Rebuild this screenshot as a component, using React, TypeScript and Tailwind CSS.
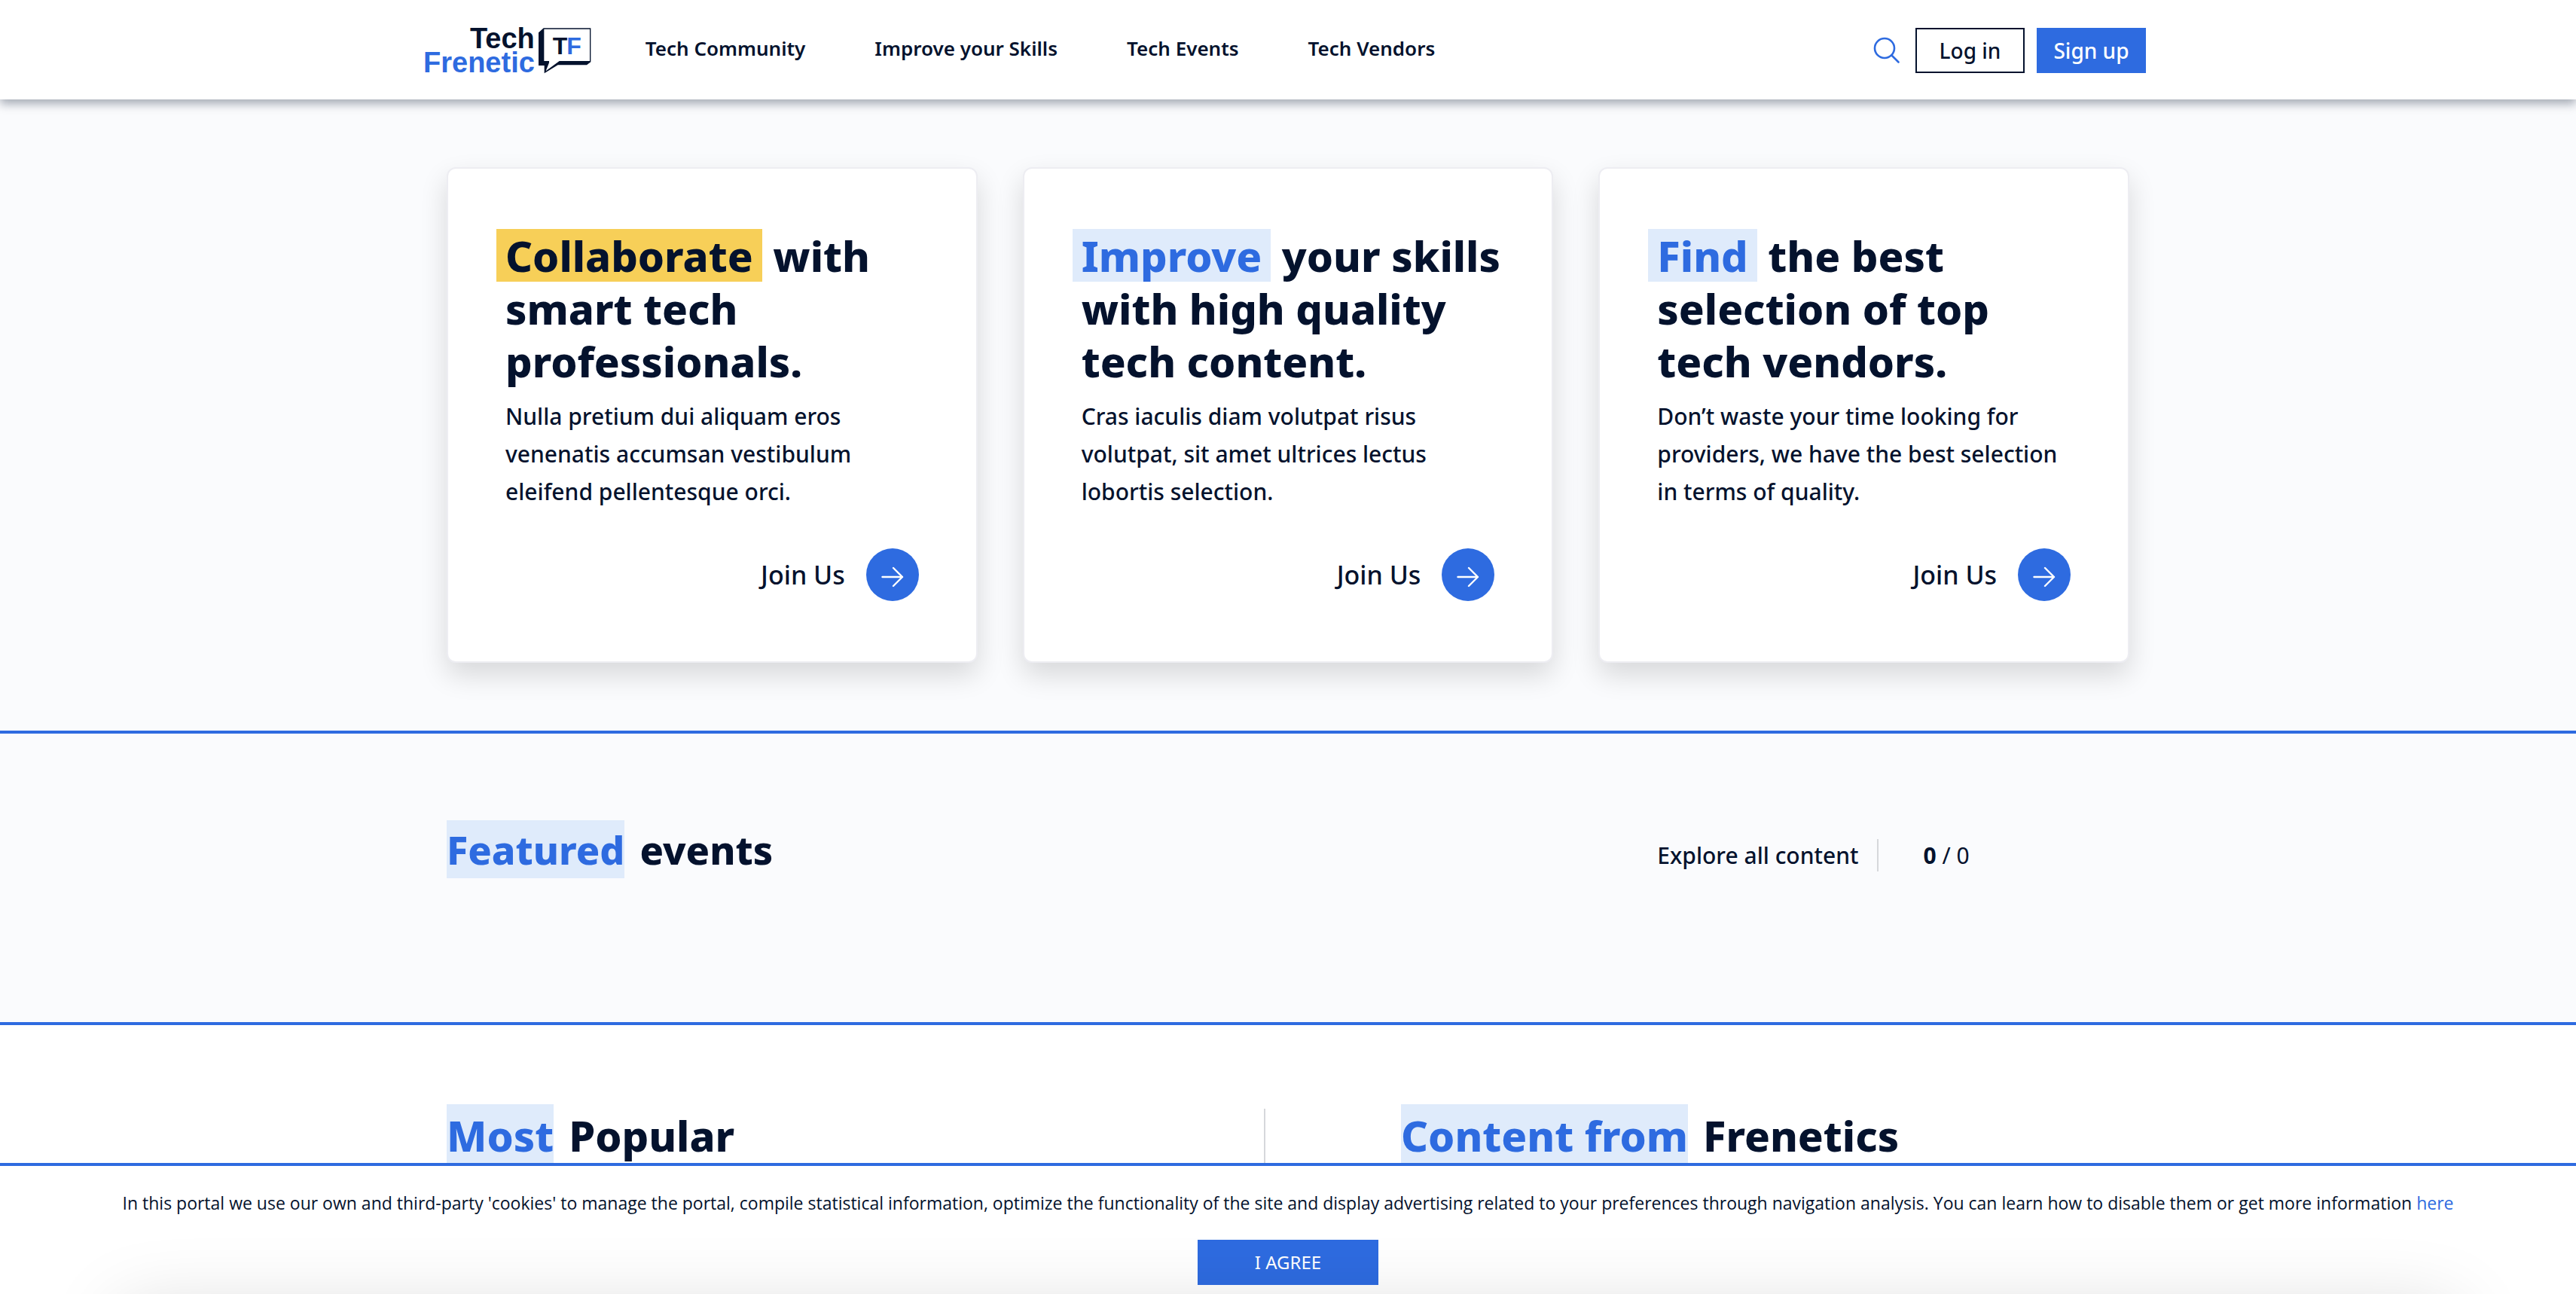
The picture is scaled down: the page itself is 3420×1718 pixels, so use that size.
import React from "react";

const navItems = ["Tech Community", "Improve your Skills", "Tech Events", "Tech Vendors"];

const cards = [
  {
    highlight: "Collaborate",
    rest: "with smart tech professionals.",
    body: "Nulla pretium dui aliquam eros venenatis accumsan vestibulum eleifend pellentesque orci.",
    tone: "bg-[#f7cf58] text-[#04122d]",
  },
  {
    highlight: "Improve",
    rest: "your skills with high quality tech content.",
    body: "Cras iaculis diam volutpat risus volutpat, sit amet ultrices lectus lobortis selection.",
    tone: "bg-[#dfebfb] text-[#2e6be0]",
  },
  {
    highlight: "Find",
    rest: "the best selection of top tech vendors.",
    body: "Don’t waste your time looking for providers, we have the best selection in terms of quality.",
    tone: "bg-[#dfebfb] text-[#2e6be0]",
  },
];

function Logo() {
  return (
    <a href="#" aria-label="Tech Frenetic" className="flex shrink-0 items-center gap-1 font-['Liberation_Sans',sans-serif]">
      <span className="flex flex-col text-right text-[38px] leading-8 font-bold">
        <span>Tech</span>
        <span className="text-[#2e6be0]">Frenetic</span>
      </span>
      <svg viewBox="491 44 213 186" className="h-[62px] w-[71px]" aria-hidden="true">
        <path d="M494 66 L514 48 H702 V183 L686 195 H571 L517 228 V197 H494 Z" fill="#04122d" />
        <path d="M516 52 H698 V179 H577 L523 219 L536 186 V179 H516 Z" fill="#fff" />
        <text x="550" y="152" fontSize="96" fontWeight="700" fill="#04122d">T</text>
        <text x="606" y="152" fontSize="96" fontWeight="700" fill="#2e6be0">F</text>
      </svg>
    </a>
  );
}

function Header() {
  return (
    <header className="relative z-10 bg-white px-8 pt-[35px] pb-[33px] shadow-[0_6px_12px_rgba(4,18,45,0.34)]">
      <div className="mx-auto flex max-w-[2296px] items-center pr-[9px]">
        <Logo />
        <nav className="ml-[72px] flex gap-[92px] pb-1.5 text-[26px] leading-9 font-semibold">
          {navItems.map((item) => (
            <a key={item} href="#" className="whitespace-nowrap">{item}</a>
          ))}
        </nav>
        <div className="ml-auto flex items-center gap-4 text-[28px] font-medium">
          <button type="button" aria-label="Search" className="mr-1">
            <svg viewBox="0 0 36 36" className="size-9" fill="none" stroke="#2e6be0" strokeWidth="2.6" strokeLinecap="round">
              <circle cx="15" cy="15" r="13" />
              <path d="M24.5 24.5 L33.5 33.5" />
            </svg>
          </button>
          <button type="button" className="h-[60px] w-[145px] border-2 border-[#04122d] leading-10">Log in</button>
          <button type="button" className="h-[60px] w-[145px] bg-[#2e6be0] leading-10 text-white">Sign up</button>
        </div>
      </div>
    </header>
  );
}

function Card({ highlight, rest, body, tone }: (typeof cards)[number]) {
  return (
    <article className="flex flex-col rounded-xl border-2 border-[#ededf2] bg-white px-[76px] py-20 shadow-[0_16px_36px_rgba(0,0,0,0.14)]">
      <h2 className="-mr-4 text-[56px] leading-[70px] font-extrabold">
        <span className={`-ml-3 inline-block px-3 ${tone}`}>{highlight}</span> {rest}
      </h2>
      <p className="mt-3.5 text-[30px] leading-[50px] font-medium">{body}</p>
      <a href="#" className="mt-[50px] flex items-center gap-7 self-end text-[34px] font-medium">
        Join Us
        <span className="flex size-[70px] items-center justify-center rounded-full bg-[#2e6be0]">
          <svg viewBox="0 0 30 28" className="mt-1.5 h-7 w-[30px]" fill="none" stroke="#fff" strokeWidth="2.4" strokeLinecap="round" strokeLinejoin="round">
            <path d="M1.5 14 H28 M16 2 L28 14 L16 26" />
          </svg>
        </span>
      </a>
    </article>
  );
}

function Mark({ children }: { children: React.ReactNode }) {
  return <span className="bg-[#dfebfb] text-[#2e6be0]">{children}</span>;
}

function CookieBar() {
  return (
    <aside aria-label="Cookies" className="fixed inset-x-0 bottom-0 z-20 flex flex-col items-center gap-8 overflow-hidden border-t-4 border-[#2e6be0] bg-white px-8 pt-8 pb-3">
      <p className="font-['Open_Sans',sans-serif] text-[23px] leading-[34px] font-medium">
        In this portal we use our own and third-party 'cookies' to manage the portal, compile statistical information, optimize the
        functionality of the site and display advertising related to your preferences through navigation analysis. You can learn how
        to disable them or get more information <a href="#" className="text-[#2e6be0]">here</a>
      </p>
      <button type="button" className="h-[60px] w-60 bg-[#2e6be0] text-2xl text-white">I AGREE</button>
      <div className="pointer-events-none absolute inset-x-40 top-full mt-5 h-40 shadow-[0_0_100px_rgba(0,0,0,0.15)]" />
    </aside>
  );
}

export default function App() {
  return (
    <div className="min-h-screen bg-white font-['Noto_Sans',sans-serif] text-[#04122d]">
      <Header />
      <main>
        <section className="border-b-4 border-[#2e6be0] bg-[#fafbfd] px-8 py-[90px]">
          <div className="mx-auto grid max-w-[2234px] grid-cols-3 gap-[60px]">
            {cards.map((card) => (
              <Card key={card.highlight} {...card} />
            ))}
          </div>
        </section>

        <section className="border-b-4 border-[#2e6be0] bg-[#fafbfd] px-8 pt-[115px] pb-[191px]">
          <div className="mx-auto grid max-w-[2234px] grid-cols-3 gap-[60px]">
            <h2 className="col-span-2 flex gap-5 text-[52px] leading-[77px] font-extrabold">
              <Mark>Featured</Mark> <span>events</span>
            </h2>
            <div className="mt-[25px] flex h-[43px] items-center pl-[78px] text-[30px]">
              <a href="#" className="mr-6 font-medium whitespace-nowrap">Explore all content</a>
              <div className="h-full border-l-2 border-[#d6d8db]" />
              <p className="ml-[60px]"><b>0</b> / 0</p>
            </div>
          </div>
        </section>

        <section className="px-8 pt-[105px] pb-[170px]">
          <div className="mx-auto grid max-w-[2234px] grid-cols-[1085fr_1149fr] text-[56px] leading-[82px] font-extrabold">
            <h2 className="flex gap-5">
              <Mark>Most</Mark> <span>Popular</span>
            </h2>
            <div className="mt-1.5 border-l-2 border-[#d6d8db]">
              <h2 className="-mt-1.5 flex gap-5 pl-[180px]">
                <Mark>Content from</Mark> <span>Frenetics</span>
              </h2>
            </div>
          </div>
        </section>
      </main>
      <CookieBar />
    </div>
  );
}
